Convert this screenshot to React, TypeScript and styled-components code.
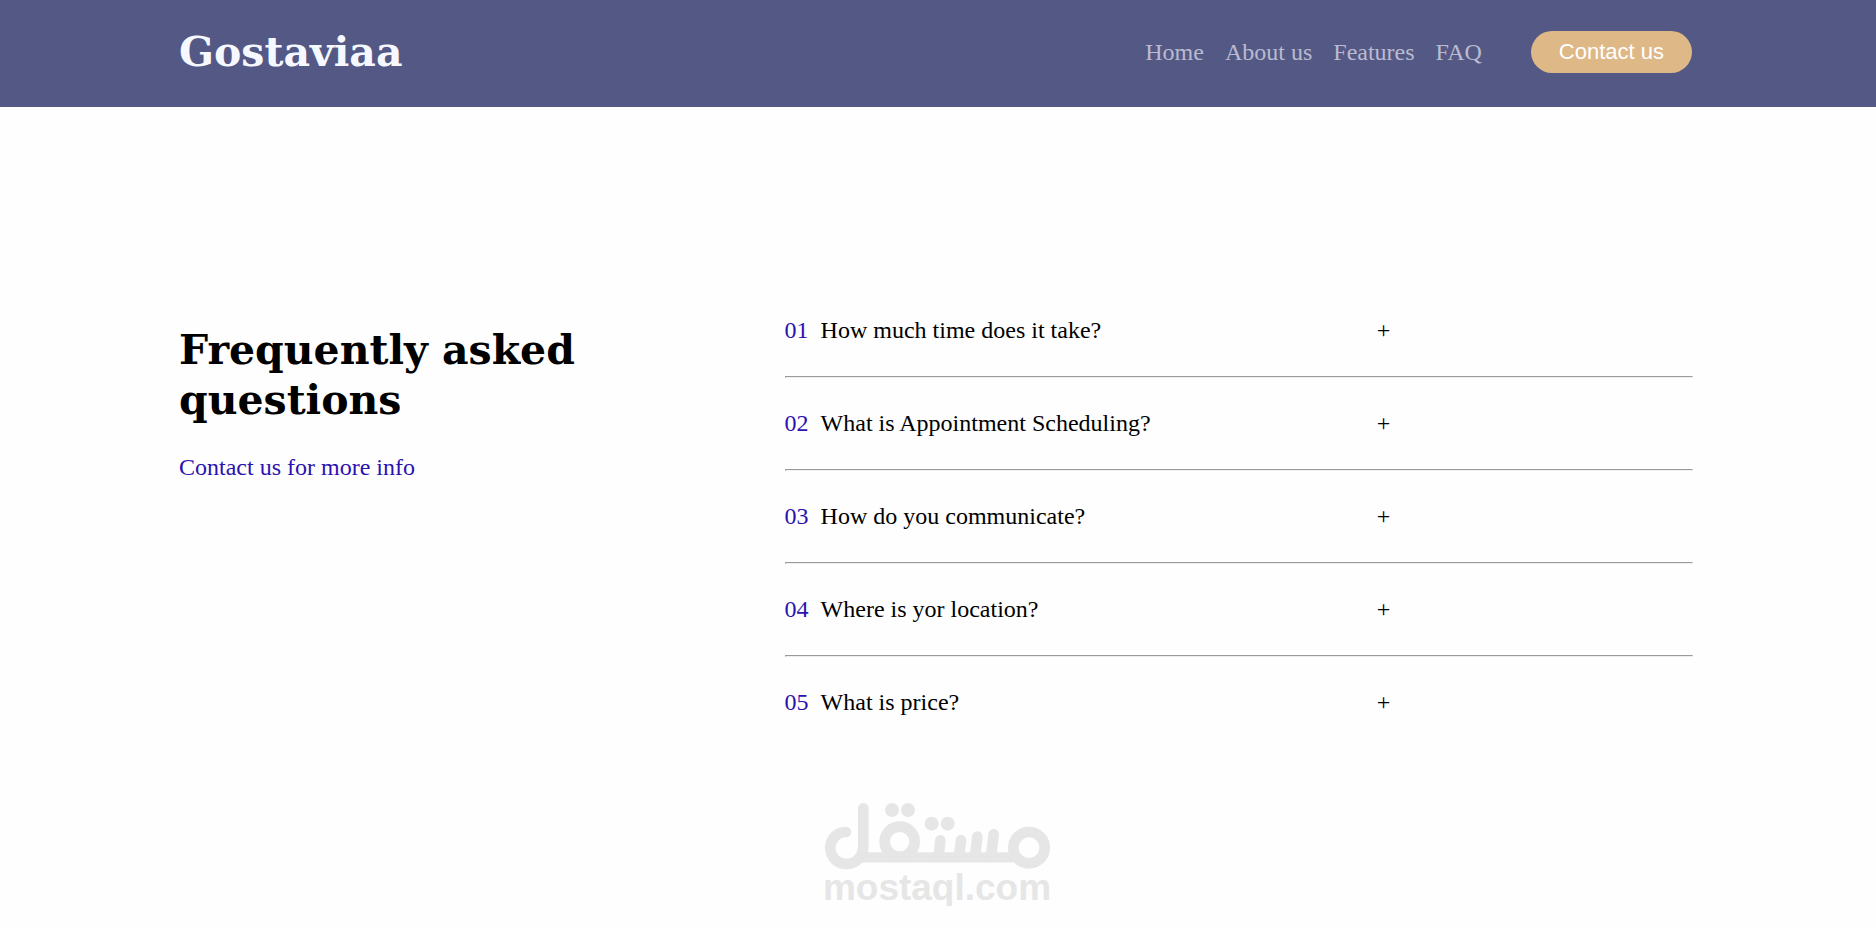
import React, { useState } from "react";
import styled, { createGlobalStyle } from "styled-components";

const GlobalStyle = createGlobalStyle`
  * { box-sizing: border-box; }
  body {
    margin: 0;
    background: #fefefe;
    color: #000;
    font-family: "Liberation Serif", serif;
    font-size: 24px;
    line-height: 31px;
  }
`;

const Header = styled.header`
  display: flex;
  align-items: center;
  justify-content: space-between;
  padding: 26px 184px 29px 179px;
  background: #545885;
`;

const Logo = styled.a`
  color: #f5f8ff;
  font-family: "DejaVu Serif", serif;
  font-size: 41px;
  font-weight: 700;
  line-height: 52px;
  text-decoration: none;
`;

const Nav = styled.nav`
  display: flex;
  align-items: center;
  gap: 21px;
`;

const NavLink = styled.a`
  color: #b9bbd0;
  text-decoration: none;
`;

const ContactButton = styled.button`
  height: 42px;
  margin-left: 28px;
  padding: 0 28px;
  border: 0;
  border-radius: 21px;
  background: #deb887;
  color: #fff;
  font-family: "Liberation Sans", sans-serif;
  font-size: 22px;
  cursor: pointer;
`;

const Faq = styled.main`
  display: grid;
  grid-template-columns: 2fr 3fr;
  padding: 178px 183px 0 179px;
`;

const Intro = styled.section`
  padding-top: 40px;
`;

const Title = styled.h1`
  margin: 0 0 27px;
  max-width: 440px;
  font-family: "DejaVu Serif", serif;
  font-size: 41px;
  line-height: 50px;
`;

const InfoLink = styled.a`
  color: #2a12b0;
  text-decoration: none;
`;

const Rule = styled.hr`
  margin: 0;
`;

const Question = styled.button`
  display: flex;
  width: calc(100% * 2 / 3);
  padding: 30px 0;
  border: 0;
  background: none;
  color: inherit;
  font: inherit;
  text-align: left;
  cursor: pointer;
`;

const Index = styled.span`
  margin-right: 12px;
  color: #2a12b0;
`;

const Sign = styled.span`
  margin-left: auto;
`;

const Watermark = styled.footer`
  display: flex;
  flex-direction: column;
  align-items: center;
  padding-right: 2px;
  margin-top: 54px;
  color: #e6e6e6;
  font-family: "Liberation Sans", sans-serif;
  font-size: 37px;
  font-weight: 700;
  line-height: 36px;
`;

const links = ["Home", "About us", "Features", "FAQ"];

const questions = [
  "How much time does it take?",
  "What is Appointment Scheduling?",
  "How do you communicate?",
  "Where is yor location?",
  "What is price?",
];

function MostaqlMark() {
  return (
    <svg width="227" height="68" viewBox="42 36 681 204" role="img" aria-label="مستقل">
      <g fill="none" stroke="currentColor" strokeWidth="32" strokeLinecap="round" strokeLinejoin="round">
        <path d="M108 126C80 126 61 148 61 174C61 202 83 222 108 222C136 222 160 202 160 166V55" />
        <path d="M150 202H622" strokeWidth="31" strokeLinecap="butt" />
        <circle cx="269" cy="155" r="45" />
        <circle cx="657" cy="173" r="47" />
        <path d="M391 151L386 200M453 151L447 200M502 140L495 200M551 133L543 200" />
      </g>
      <g fill="currentColor">
        <circle cx="246" cy="60" r="21" />
        <circle cx="294" cy="60" r="21" />
        <circle cx="365" cy="101" r="21" />
        <circle cx="413" cy="101" r="21" />
      </g>
    </svg>
  );
}

export default function App() {
  const [open, setOpen] = useState<number | null>(null);
  return (
    <>
      <GlobalStyle />
      <Header>
        <Logo href="#">Gostaviaa</Logo>
        <Nav>
          {links.map((label) => (
            <NavLink key={label} href="#">{label}</NavLink>
          ))}
          <ContactButton>Contact us</ContactButton>
        </Nav>
      </Header>
      <Faq>
        <Intro>
          <Title>Frequently asked questions</Title>
          <InfoLink href="#">Contact us for more info</InfoLink>
        </Intro>
        <section>
          {questions.map((text, i) => (
            <React.Fragment key={text}>
              {i > 0 && <Rule />}
              <Question aria-expanded={open === i} onClick={() => setOpen(open === i ? null : i)}>
                <Index>0{i + 1}</Index>
                <span>{text}</span>
                <Sign>+</Sign>
              </Question>
            </React.Fragment>
          ))}
        </section>
      </Faq>
      <Watermark>
        <MostaqlMark />
        <span>mostaql.com</span>
      </Watermark>
    </>
  );
}
